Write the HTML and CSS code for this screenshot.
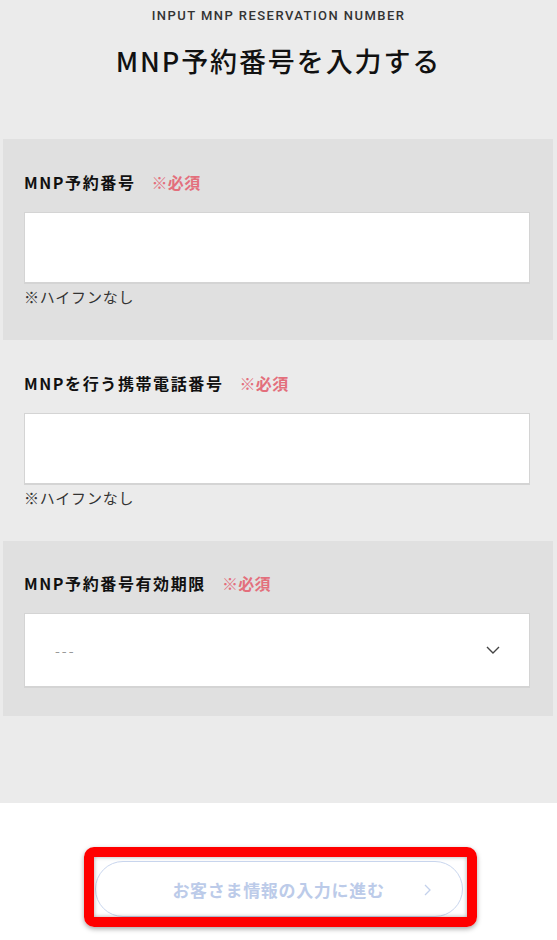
FILE: index.html
```html
<!DOCTYPE html>
<html lang="ja">
<head>
<meta charset="utf-8">
<title>MNP予約番号を入力する</title>
<link rel="stylesheet" href="styles.css">
</head>
<body>
<main class="page">
  <div class="top">
    <p class="eyebrow">INPUT MNP RESERVATION NUMBER</p>
    <h1 class="title">MNP予約番号を入力する</h1>

    <section class="field field--shaded">
      <div class="label">MNP予約番号<span class="req">※必須</span></div>
      <div class="input"></div>
      <p class="note">※ハイフンなし</p>
    </section>

    <section class="field">
      <div class="label">MNPを行う携帯電話番号<span class="req">※必須</span></div>
      <div class="input"></div>
      <p class="note">※ハイフンなし</p>
    </section>

    <section class="field field--shaded field--last">
      <div class="label">MNP予約番号有効期限<span class="req">※必須</span></div>
      <div class="select">
        <span class="placeholder">---</span>
        <svg class="caret" width="14" height="8" viewBox="0 0 14 8"><polyline points="1,1 7,7 13,1" fill="none" stroke="#444" stroke-width="1.4"/></svg>
      </div>
    </section>
  </div>

  <div class="bottom">
    <div class="btn-wrap">
      <button class="btn" type="button">お客さま情報の入力に進む
        <svg class="btn-arrow" width="7" height="12" viewBox="0 0 7 12"><polyline points="1,1 6,6 1,11" fill="none" stroke="#c3d1ec" stroke-width="1.3"/></svg>
      </button>
      <div class="highlight"></div>
    </div>
  </div>
</main>
</body>
</html>
```

FILE: styles.css
```css
* { box-sizing: border-box; }
html, body { margin: 0; padding: 0; }
body {
  background: #fff;
  font-family: "Noto Sans CJK JP", "Noto Sans", sans-serif;
  color: #111;
}
.page { width: 557px; }
.top {
  background: #ebebeb;
  padding-top: 8px;
  padding-bottom: 87px;
}
.eyebrow {
  margin: 0;
  text-align: center;
  font-family: Roboto, "Noto Sans", sans-serif;
  font-weight: 500;
  font-size: 13px;
  line-height: 16px;
  letter-spacing: 1.45px;
  color: #333;
}
.title {
  margin: 17px 0 0;
  text-align: center;
  font-size: 27px;
  line-height: 40px;
  font-weight: 500;
  letter-spacing: 0.07em;
  color: #111;
  height: 98px;
}
.field {
  margin: 0 4px 0 3px;
  padding: 31px 23px 32px 21px;
}
.field--shaded { background: #e0e0e0; }
.field--last { padding-bottom: 28px; padding-top: 30px; }
.label {
  font-size: 16px;
  line-height: 24px;
  font-weight: 700;
  letter-spacing: 0.1em;
  color: #111;
}
.req {
  margin-left: 16px;
  color: #e36f7c;
  font-weight: 700;
  letter-spacing: 0.02em;
}
.input {
  margin-top: 18px;
  height: 72px;
  background: #fff;
  border: 1px solid #d4d4d4;
  border-bottom-width: 2px;
}
.note {
  margin: 2px 0 0;
  font-size: 15px;
  line-height: 22px;
  letter-spacing: 0.05em;
  color: #333;
}
.select {
  margin-top: 18px;
  height: 75px;
  background: #fff;
  border: 1px solid #d4d4d4;
  border-bottom-width: 2px;
  display: flex;
  align-items: center;
  justify-content: space-between;
  padding: 0 29px 0 30px;
}
.placeholder {
  color: #999;
  font-size: 14px;
  letter-spacing: 2px;
}
.caret { display: block; }
.bottom {
  padding-top: 58px;
  padding-bottom: 23px;
  display: flex;
  justify-content: center;
}
.btn-wrap {
  position: relative;
  width: 368px;
}
.btn {
  position: relative;
  display: flex;
  align-items: center;
  justify-content: center;
  width: 368px;
  height: 56px;
  border-radius: 28px;
  border: 1px solid #c9d6ee;
  background: #fff;
  font-family: "Noto Sans CJK JP", "Noto Sans", sans-serif;
  font-size: 17px;
  font-weight: 700;
  letter-spacing: 0.04em;
  color: #bccbe9;
  padding: 0;
}
.btn-arrow {
  position: absolute;
  right: 31px;
  top: 22px;
}
.highlight {
  position: absolute;
  left: -11px;
  right: -14px;
  top: -14px;
  bottom: -10px;
  border: 10px solid #ff0000;
  border-radius: 10px;
  box-shadow: 0 2px 5px rgba(0,0,0,0.35), inset 0 0 4px rgba(0,0,0,0.35);
  pointer-events: none;
}
```
